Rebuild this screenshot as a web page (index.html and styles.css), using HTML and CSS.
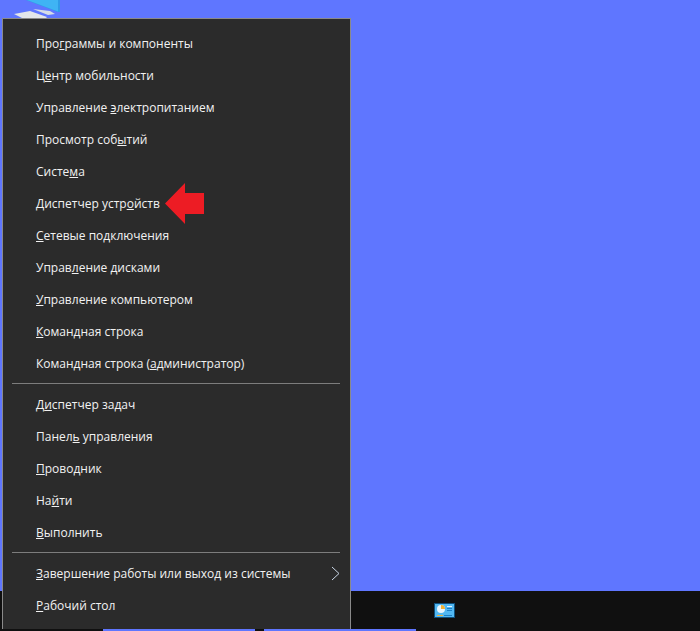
FILE: index.html

```html
<!DOCTYPE html>
<html lang="ru">
<head>
  <meta charset="UTF-8" />
  <title>Меню</title>
  <link rel="stylesheet" href="styles.css">
</head>
<body>
  <div class="desktop">
    <svg class="pc-icon" width="62" height="18" viewBox="0 0 62 18">
      <polygon points="26,0 60,0 60,12 58,12" fill="#2f9be8"/>
      <polygon points="27,0 58,0 58,11.5" fill="#3fb4f4"/>
      <polygon points="33,9 50,11 55,14 48,15" fill="#d6dde6"/>
      <polygon points="14,14 30,11 47,17 46,18 22,18" fill="#e3e6ea"/>
    </svg>

    <div class="menu">
      <div class="menu-group">
        <div class="menu-item"><span>Про<u>г</u>раммы и компоненты</span></div>
        <div class="menu-item"><span>Ц<u>е</u>нтр мобильности</span></div>
        <div class="menu-item"><span>Управление <u>э</u>лектропитанием</span></div>
        <div class="menu-item"><span>Просмотр соб<u>ы</u>тий</span></div>
        <div class="menu-item"><span>Систе<u>м</u>а</span></div>
        <div class="menu-item"><span>Диспетчер устр<u>о</u>йств</span>
          <svg class="arrow" width="39" height="41" viewBox="0 0 39 41"><polygon points="0,20.5 20,0 20,10 39,10 39,31 20,31 20,41" fill="#ed1c24"/></svg>
        </div>
        <div class="menu-item"><span><u>С</u>етевые подключения</span></div>
        <div class="menu-item"><span>Управ<u>л</u>ение дисками</span></div>
        <div class="menu-item"><span><u>У</u>правление компьютером</span></div>
        <div class="menu-item"><span><u>К</u>омандная строка</span></div>
        <div class="menu-item"><span>Командная строка (<u>а</u>дминистратор)</span></div>
      </div>
      <div class="menu-group">
        <div class="menu-item"><span>Д<u>и</u>спетчер задач</span></div>
        <div class="menu-item"><span>Панел<u>ь</u> управления</span></div>
        <div class="menu-item"><span><u>П</u>роводник</span></div>
        <div class="menu-item"><span>На<u>й</u>ти</span></div>
        <div class="menu-item"><span><u>В</u>ыполнить</span></div>
      </div>
      <div class="menu-group">
        <div class="menu-item has-sub"><span><u>З</u>авершение работы или выход из системы</span>
          <svg class="chevron" width="9" height="15" viewBox="0 0 9 15"><path d="M1 1l7 6.5-7 6.5" fill="none" stroke="#c9d6e6" stroke-width="1"/></svg>
        </div>
        <div class="menu-item"><span><u>Р</u>абочий стол</span></div>
      </div>
    </div>

    <div class="taskbar">
      <svg class="task-icon" width="21" height="15" viewBox="0 0 21 15">
        <rect width="21" height="15" fill="#0f4f7c"/>
        <rect x="1" y="1" width="19" height="13" fill="#52b8f2"/>
        <circle cx="7" cy="6" r="4" fill="#e8f6ff"/>
        <path d="M7 6V2a4 4 0 0 1 4 4z" fill="#f2b134"/>
        <rect x="13" y="3" width="5" height="1" fill="#e8f6ff"/>
        <rect x="13" y="5" width="5" height="1" fill="#1d7fc4"/>
        <rect x="13" y="7" width="5" height="1" fill="#1d7fc4"/>
        <rect x="3" y="12" width="6" height="1" fill="#f2b134"/>
        <rect x="10" y="12" width="8" height="1" fill="#1d7fc4"/>
      </svg>
    </div>
    <div class="bottom-strip">
      <div class="strip-blue strip-a"></div>
      <div class="strip-blue strip-b"></div>
    </div>
  </div>
</body>
</html>
```

FILE: styles.css

```css
html, body {
  margin: 0;
  height: 100%;
  overflow: hidden;
}
body {
  font-family: 'Open Sans', 'Noto Sans', sans-serif;
  background-color: #5f76ff;
}
.desktop {
  position: relative;
  width: 700px;
  height: 631px;
  background-color: #5f76ff;
  overflow: hidden;
}
.pc-icon {
  position: absolute;
  left: 0;
  top: 0;
}
.taskbar {
  position: absolute;
  left: 0;
  right: 0;
  top: 591px;
  height: 38px;
  background-color: #101010;
}
.task-icon {
  position: absolute;
  left: 434px;
  top: 12px;
}
.bottom-strip {
  position: absolute;
  left: 0;
  right: 0;
  top: 629px;
  height: 2px;
  background-color: #101010;
}
.strip-blue {
  position: absolute;
  top: 0;
  height: 2px;
  background-color: #5f76ff;
}
.strip-a {
  left: 103px;
  width: 152px;
}
.strip-b {
  left: 264px;
  width: 152px;
}
.menu {
  position: absolute;
  left: 2px;
  top: 18px;
  z-index: 2;
  width: 349px;
  height: 611px;
  box-sizing: border-box;
  padding: 8px 10px 0 9px;
  background-color: #2b2b2b;
  border: 1px solid #8a8a8a;
  border-bottom: 0;
}
.menu-group {
  border-bottom: 1px solid #7d7d7d;
  padding-bottom: 4px;
  margin-bottom: 4px;
}
.menu-group:last-child {
  border-bottom: 0;
}
.menu-item {
  position: relative;
  display: flex;
  align-items: center;
  justify-content: space-between;
  height: 32px;
  padding-left: 24px;
  font-size: 12px;
  color: #f2f2f2;
  white-space: nowrap;
}
.arrow {
  position: absolute;
  left: 153px;
  top: -4px;
}
.chevron {
  margin-right: 0;
}
</style>
```
